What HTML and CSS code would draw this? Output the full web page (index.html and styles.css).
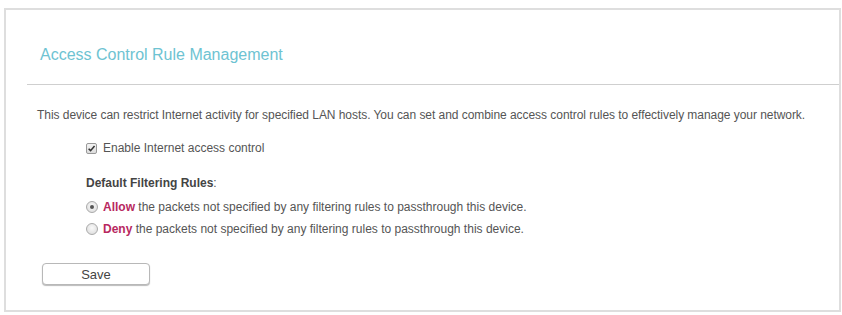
FILE: index.html
```html
<!DOCTYPE html>
<html>
<head>
<meta charset="utf-8">
<link rel="stylesheet" href="styles.css">
</head>
<body>
<div class="panel">
  <h2 class="title">Access Control Rule Management</h2>
  <div class="sep"></div>
  <p class="desc">This device can restrict Internet activity for specified LAN hosts. You can set and combine access control rules to effectively manage your network.</p>
  <div class="opts">
    <label class="row check-row"><span class="cb"><svg viewBox="0 0 10 10" width="9" height="9"><path d="M1.8 5.2 L4 7.4 L8.4 2.2" fill="none" stroke="#333" stroke-width="1.7"/></svg></span>Enable Internet access control</label>
    <div class="label-row"><b>Default Filtering Rules</b>:</div>
    <label class="row radio-row"><span class="rb on"></span><b class="kw">Allow</b>&nbsp;the packets not specified by any filtering rules to passthrough this device.</label>
    <label class="row radio-row"><span class="rb"></span><b class="kw">Deny</b>&nbsp;the packets not specified by any filtering rules to passthrough this device.</label>
  </div>
  <div class="actions"><button class="save">Save</button></div>
</div>
</body>
</html>
```
FILE: styles.css
```css
html, body { margin: 0; padding: 0; background: #fff; }
body { font-family: "Liberation Sans", Arial, sans-serif; color: #555; font-size: 12px; }
.panel {
  margin: 8px 1px 0 4px;
  height: 304px;
  box-sizing: border-box;
  border: 2px solid #dedede;
}
.title {
  margin: 35px 0 0 34px;
  font-weight: normal;
  font-size: 16px;
  color: #6ec3d2;
  line-height: 20px;
}
.sep { height: 1px; background: #cfcfcf; margin: 19px 0 0 21px; }
.desc { margin: 22px 0 0 31px; line-height: 16px; letter-spacing: -0.05px; }
.opts { margin-left: 80px; }
.row { display: flex; align-items: center; height: 16px; }
.check-row { margin-top: 17px; }
.cb {
  width: 9px; height: 9px; border: 1px solid #999; border-radius: 2px;
  background: linear-gradient(#f4f4f4, #dcdcdc);
  margin-right: 6px; display: inline-flex; align-items: center; justify-content: center;
}
.cb svg { display: block; }
.label-row { margin-top: 19px; line-height: 16px; }
.label-row b { color: #444; }
.radio-row { margin-top: 6px; }
.label-row + .radio-row { margin-top: 8px; }
.rb {
  width: 10px; height: 10px; border: 1px solid #aaa; border-radius: 50%;
  background: radial-gradient(circle at 50% 40%, #fafafa, #d8d8d8);
  margin-right: 5px; position: relative; box-sizing: content-box;
}
.rb.on::after {
  content: ""; position: absolute; left: 3px; top: 3px; width: 4px; height: 4px;
  border-radius: 50%; background: #555;
}
.kw { color: #b8285f; font-weight: bold; }
.actions { margin: 26px 0 0 36px; }
.save {
  width: 108px; height: 22px; border: 1px solid #b8b8b8; border-radius: 4px;
  background: #fff; box-shadow: 0 1px 1px #bbb;
  font-family: "Liberation Sans", Arial, sans-serif; font-size: 13px; color: #444;
  padding: 0;
}
```
